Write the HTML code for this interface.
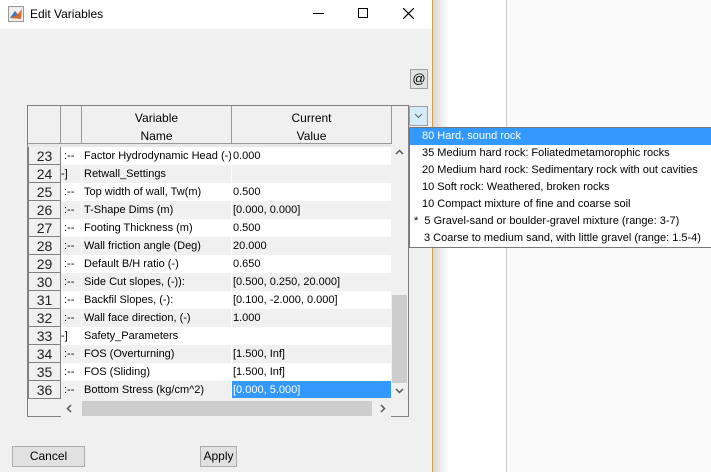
<!DOCTYPE html>
<html><head><style>
*{margin:0;padding:0;box-sizing:border-box}
body{width:711px;height:472px;position:relative;overflow:hidden;background:#fafafa;font-family:"Liberation Sans",sans-serif;font-size:11px;color:#000}
.a{position:absolute}
.row{position:absolute;left:61px;width:330px;height:18px;line-height:18px;white-space:nowrap}
.num{position:absolute;left:28px;width:33px;height:18px;border:1px solid #808080;border-top:none;background:#f0f0f0;text-align:center;font-size:14px;line-height:18px;color:#222}
.dd div{height:17px;line-height:17px;padding-left:12px;white-space:nowrap}
</style></head><body>
<div class="a" style="left:433px;top:0;width:73px;height:472px;background:#fff"></div>
<div class="a" style="left:433px;top:0;width:16px;height:472px;background:linear-gradient(to right,#d8d8d8,#fff)"></div>
<div class="a" style="left:506px;top:0;width:1px;height:472px;background:#c8c8c8"></div>
<div class="a" style="left:0;top:0;width:432px;height:472px;background:#f0f0f0"></div>
<div class="a" style="left:432px;top:0;width:1px;height:472px;background:#d4a050"></div>
<div class="a" style="left:0;top:0;width:432px;height:29px;background:#fff"></div>
<svg class="a" style="left:8px;top:6px" width="16" height="16"><rect x="0.5" y="0.5" width="15" height="15" fill="#eee" stroke="#999"/><path d="M2 12 L7 5 L10 8 L14 3 L13 13 Z" fill="#d4692a"/><path d="M2 12 L7 5 L9 9 Z" fill="#3a7bc8"/></svg>
<div class="a" style="left:30px;top:7px;font-size:12px">Edit Variables</div>
<div class="a" style="left:313px;top:13px;width:11px;height:1px;background:#000"></div>
<div class="a" style="left:358px;top:8px;width:10px;height:10px;border:1px solid #000"></div>
<svg class="a" style="left:403px;top:8px" width="11" height="11"><path d="M0 0L11 11M11 0L0 11" stroke="#000" stroke-width="1.2"/></svg>
<div class="a" style="left:410px;top:69px;width:18px;height:20px;border:1px solid #a0a0a0;background:#e1e1e1;text-align:center;line-height:18px;font-size:13px">@</div>
<div class="a" style="left:27px;top:105px;width:382px;height:312px;border:1px solid #808080;background:#f0f0f0"></div>
<div class="a" style="left:28px;top:106px;width:363px;height:38px;border-bottom:1px solid #999;background:#f0f0f0"></div>
<div class="a" style="left:60px;top:106px;width:1px;height:38px;background:#999"></div>
<div class="a" style="left:81px;top:106px;width:1px;height:38px;background:#999"></div>
<div class="a" style="left:231px;top:106px;width:1px;height:38px;background:#999"></div>
<div class="a" style="left:391px;top:106px;width:1px;height:38px;background:#999"></div>
<div class="a" style="left:82px;top:109px;width:149px;text-align:center;line-height:18px;font-size:12px">Variable<br>Name</div>
<div class="a" style="left:232px;top:109px;width:159px;text-align:center;line-height:18px;font-size:12px">Current<br>Value</div>
<div class="a" style="left:28px;top:144px;width:363px;height:3px;background:#e8e8e8"></div>
<div id="rows"></div>
<div class="a" style="left:391px;top:144px;width:17px;height:256px;background:#f0f0f0"></div>
<div class="a" style="left:392px;top:295px;width:15px;height:88px;background:#cdcdcd"></div>
<svg class="a" style="left:395px;top:388px" width="9" height="6"><path d="M1 1L4.5 4.5L8 1" stroke="#555" fill="none" stroke-width="1.5"/></svg>
<svg class="a" style="left:395px;top:149px" width="9" height="6"><path d="M1 5L4.5 1.5L8 5" stroke="#555" fill="none" stroke-width="1.5"/></svg>
<div class="a" style="left:61px;top:400px;width:330px;height:17px;background:#f0f0f0"></div>
<div class="a" style="left:82px;top:401px;width:290px;height:15px;background:#cdcdcd"></div>
<svg class="a" style="left:66px;top:404px" width="6" height="9"><path d="M5 1L1.5 4.5L5 8" stroke="#555" fill="none" stroke-width="1.5"/></svg>
<svg class="a" style="left:380px;top:404px" width="6" height="9"><path d="M1 1L4.5 4.5L1 8" stroke="#555" fill="none" stroke-width="1.5"/></svg>
<div class="a" style="left:409px;top:106px;width:19px;height:20px;border:1px solid #a0a0a0;background:#d4ecf8"></div>
<svg class="a" style="left:414px;top:113px" width="9" height="6"><path d="M1 1L4.5 4.5L8 1" stroke="#666" fill="none"/></svg>
<div class="a dd" style="left:409px;top:127px;width:302px;height:121px;border:1px solid #777;border-right:none;background:#fff">
<div style="background:#3399ff;color:#fff">80 Hard, sound rock</div>
<div>35 Medium hard rock: Foliatedmetamorophic rocks</div>
<div>20 Medium hard rock: Sedimentary rock with out cavities</div>
<div>10 Soft rock: Weathered, broken rocks</div>
<div>10 Compact mixture of fine and coarse soil</div>
<div style="padding-left:4px">*&nbsp; 5 Gravel-sand or boulder-gravel mixture (range: 3-7)</div>
<div style="padding-left:14px">3 Coarse to medium sand, with little gravel (range: 1.5-4)</div>
</div>
<div class="a" style="left:12px;top:446px;width:73px;height:21px;border:1px solid #adadad;background:#e1e1e1;text-align:center;line-height:19px;font-size:12px">Cancel</div>
<div class="a" style="left:200px;top:446px;width:37px;height:21px;border:1px solid #adadad;background:#e1e1e1;text-align:center;line-height:19px;font-size:12px">Apply</div>
<script>
var d=[[23,":--","Factor Hydrodynamic Head (-)","0.000"],[24,"-]","Retwall_Settings",""],[25,":--","Top width of wall, Tw(m)","0.500"],[26,":--","T-Shape Dims (m)","[0.000, 0.000]"],[27,":--","Footing Thickness (m)","0.500"],[28,":--","Wall friction angle (Deg)","20.000"],[29,":--","Default B/H ratio (-)","0.650"],[30,":--","Side Cut slopes, (-)):","[0.500, 0.250, 20.000]"],[31,":--","Backfil Slopes, (-):","[0.100, -2.000, 0.000]"],[32,":--","Wall face direction, (-)","1.000"],[33,"-]","Safety_Parameters",""],[34,":--","FOS (Overturning)","[1.500, Inf]"],[35,":--","FOS (Sliding)","[1.500, Inf]"],[36,":--","Bottom Stress (kg/cm^2)","[0.000, 5.000]"]];
var h="";d.forEach(function(r,i){var y=147+i*18;var bg=i%2?"#f0f0f0":"#fff";var sel=i==13;
h+='<div class="num" style="top:'+y+'px">'+r[0]+'</div>';
h+='<div class="row" style="top:'+y+'px;background:'+bg+'"><span class="a" style="left:'+(r[1]=="-]"?0:3)+'px">'+r[1]+'</span><span class="a" style="left:20px;width:1px;height:18px;background:#fff"></span><span class="a" style="left:23px">'+r[2]+'</span><span class="a" style="left:170px;width:1px;height:18px;background:#fff"></span><span class="a" style="left:171px;width:159px;height:17px;padding-left:1px;'+(sel?'background:#3399ff;color:#fff':'')+'">'+r[3]+'</span></div>';});
document.getElementById("rows").innerHTML=h;
</script>
</body></html>
